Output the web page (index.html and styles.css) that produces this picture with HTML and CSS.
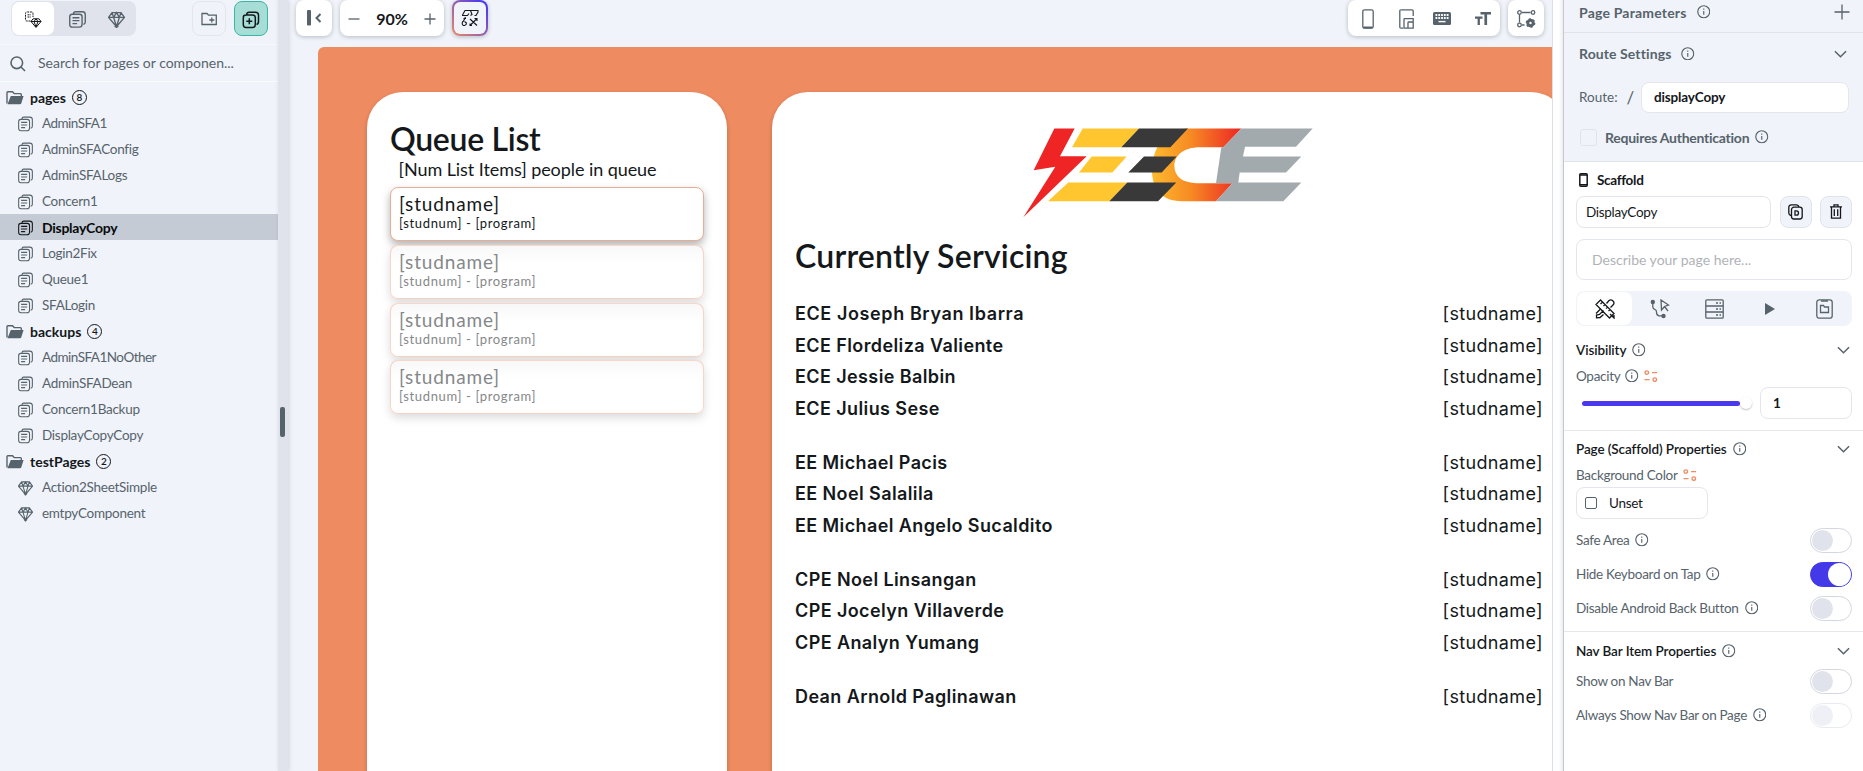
FILE: index.html
```html
<!DOCTYPE html>
<html lang="en">
<head>
<meta charset="utf-8">
<title>DisplayCopy</title>
<link rel="stylesheet" href="styles.css">
</head>
<body>
<svg class="defs" width="0" height="0" aria-hidden="true">
  <symbol id="pages" viewBox="0 0 16 16"><path d="M4.2 3V2.6Q4.2.7 6.2.7H12.600Q15.300.7 15.300 3.300V10.400Q15.300 12.300 13.500 12.600M3 3.100H9.900Q12.300 3.100 12.300 5.500V12.500Q12.300 15.200 9.600 15.200H3.200Q.7 15.200.7 12.600V5.600Q.7 3.100 3 3.100ZM3.300 6.300H9.800M3.300 9.100H9.800M3.300 11.900H7.600"/></symbol>
  <symbol id="gem" viewBox="0 0 16 16"><path d="M3.800 1.500H12.200L15.500 6 8 14.800.5 6ZM.5 6H15.500M5.300 6 8 14.800 10.700 6 8 1.500ZM3.800 1.500 5.300 6M12.200 1.500 10.700 6M6.200 13.800 8 15.500 9.800 13.800"/></symbol>
  <symbol id="folder" viewBox="0 0 18 14"><path fill="none" d="M1 12.500V1.600Q1 .8 1.800.8H6.500L8.200 2.600H14.400Q15.300 2.600 15.300 3.500V5"/><path class="solid" d="M1.500 13.200 4.800 5H17.600L15.300 12.200Q15 13.200 14 13.200Z"/></symbol>
  <symbol id="info" viewBox="0 0 14 14"><circle cx="7" cy="7" r="6.200"/><path d="M7 6.200V10.200M7 3.600V4.900"/></symbol>
  <symbol id="chev" viewBox="0 0 14 8"><path d="M1 1 7 7 13 1"/></symbol>
  <symbol id="vars" viewBox="0 0 14 12"><circle cx="2.800" cy="2.600" r="1.800"/><circle cx="10.800" cy="9.600" r="1.800"/><path d="M8 2.600H13M.5 9.600H5.500"/></symbol>
</svg>
<div class="app">
  <aside class="sidebar">
    <div class="side-tools">
      <div class="segment">
        <span class="seg on"><svg width="18" height="18" viewBox="0 0 18 18"><path stroke-dasharray="2 .8" d="M6.500 10H3Q1.500 10 1.500 8.500V2.500Q1.500 1 3 1H7.500Q9 1 9 2.500V6M3.500 3.800H7M3.500 6H7"/><path d="M9 7.800H15L17 10.500 12 16.500 7 10.500ZM7 10.500H17M10 10.500 12 16 14 10.500 12 7.800Z"/></svg></span>
        <span class="seg"><svg width="17" height="17"><use href="#pages"/></svg></span>
        <span class="seg"><svg width="17" height="17"><use href="#gem"/></svg></span>
      </div>
      <span class="sq add-folder"><svg width="17" height="14" viewBox="0 0 17 14"><path d="M1 12.500V1.500H6L7.500 3.200H15.300V12.500ZM8.300 8H13.300M10.800 5.500V10.500"/></svg></span>
      <span class="sq add-page"><svg width="18" height="18" viewBox="0 0 18 18"><path d="M4.500 3.500Q5 1.200 7 1.200H13.500Q16.500 1.200 16.500 4V10.500Q16.500 13 14.500 13.500M4 4H10.500Q13.300 4 13.300 6.500V13.500Q13.300 16.500 10.500 16.500H4Q1.300 16.500 1.300 13.500V6.500Q1.300 4 4 4ZM7.300 7.300V13.300M4.300 10.300H10.300"/></svg></span>
    </div>
    <div class="search"><svg width="16" height="16" viewBox="0 0 16 16"><circle cx="6.800" cy="6.800" r="5.800"/><path d="M11 11 15 15"/></svg><span>Search for pages or componen...</span></div>
    <ul class="tree">
      <li class="group"><svg><use href="#folder"/></svg><b>pages</b><i>8</i></li>
      <li class="tight"><svg><use href="#pages"/></svg>AdminSFA1</li>
      <li><svg><use href="#pages"/></svg>AdminSFAConfig</li>
      <li><svg><use href="#pages"/></svg>AdminSFALogs</li>
      <li><svg><use href="#pages"/></svg>Concern1</li>
      <li class="selected"><svg><use href="#pages"/></svg>DisplayCopy</li>
      <li><svg><use href="#pages"/></svg>Login2Fix</li>
      <li><svg><use href="#pages"/></svg>Queue1</li>
      <li><svg><use href="#pages"/></svg>SFALogin</li>
      <li class="group"><svg><use href="#folder"/></svg><b>backups</b><i>4</i></li>
      <li class="tight"><svg><use href="#pages"/></svg>AdminSFA1NoOther</li>
      <li><svg><use href="#pages"/></svg>AdminSFADean</li>
      <li><svg><use href="#pages"/></svg>Concern1Backup</li>
      <li><svg><use href="#pages"/></svg>DisplayCopyCopy</li>
      <li class="group"><svg><use href="#folder"/></svg><b>testPages</b><i>2</i></li>
      <li><svg><use href="#gem"/></svg>Action2SheetSimple</li>
      <li><svg><use href="#gem"/></svg>emtpyComponent</li>
    </ul>
  </aside>
  <div class="splitter"><span></span></div>
  <main class="canvas">
    <div class="toolbar">
      <span class="tool collapse"><svg width="15" height="16" viewBox="0 0 15 16"><rect x="0" y="0" width="4" height="15.500" rx="1"/><path d="M13.500 4 9.500 8 13.500 12"/></svg></span>
      <div class="tool zoom"><svg width="12" height="12" viewBox="0 0 12 12"><path d="M.5 6H11.500"/></svg><span>90%</span><svg width="12" height="12" viewBox="0 0 12 12"><path d="M.5 6H11.500M6 .5V11.500"/></svg></div>
      <span class="tool magic"><svg width="18" height="18" viewBox="0 0 18 18"><path d="M1.500 6 4 1.500H17V3L15 6.500H13.500M1 6.500H6.500L8 4.500M9.500 1.500 11 5.500 9.500 6.500M2.500 9.500H5M4.500 8 2.500 12Q1 13 1.200 14.500 1.500 16.800 3.500 16.500T5.500 14L3.500 12.500M9 10 16 16.500M16 9.500 9 16.500M13.500 9.500H16V12M9 14.500V16.500H11"/></svg></span>
      <span class="grow"></span>
      <div class="tool devices">
        <svg width="12" height="20" viewBox="0 0 12 20"><rect x=".8" y=".8" width="10.400" height="18.400" rx="1.800"/><path class="thick" d="M1.500 18.500H10.500"/></svg>
        <svg width="15" height="20" viewBox="0 0 15 20"><path d="M4 19.200H2Q.8 19.200.8 18V2Q.8.8 2 .8H13Q14.200.8 14.200 2V7M5 19.200V10.500Q5 9.700 5.800 9.700H14.200V19.200ZM9 19V13.700Q9 13 9.800 13H14"/></svg>
        <svg width="18" height="13" viewBox="0 0 18 13"><rect class="fill" width="18" height="13" rx="1.500"/><path class="keys" d="M2.500 3H15.500M2.500 6H15.500"/><path class="bar" d="M5.500 9.600H12.500"/></svg>
        <svg width="16" height="13" viewBox="0 0 16 13"><path class="fill" d="M5.500 0H16V2.600H12.100V13H9.400V2.600H5.500ZM0 4.600H7.500V6.800H4.900V13H2.600V6.800H0Z"/></svg>
      </div>
      <span class="tool settings"><svg width="19" height="18" viewBox="0 0 19 18"><path d="M5 2.500H13.500M2.500 5V12.500M5 15H7.500"/><circle cx="2.500" cy="2.500" r="1.800"/><circle cx="16" cy="2.500" r="1.800"/><circle cx="2.500" cy="15" r="1.800"/><circle class="gear" cx="13.500" cy="13" r="2.700"/><circle class="teeth" cx="13.500" cy="13" r="4.100"/></svg></span>
    </div>
    <div class="board">
      <section class="panel queue">
        <h1>Queue List</h1>
        <p>[Num List Items] people in queue</p>
        <div class="card first"><strong>[studname]</strong><small>[studnum] - [program]</small></div>
        <div class="card"><strong>[studname]</strong><small>[studnum] - [program]</small></div>
        <div class="card"><strong>[studname]</strong><small>[studnum] - [program]</small></div>
        <div class="card"><strong>[studname]</strong><small>[studnum] - [program]</small></div>
      </section>
      <section class="panel serving">
        <svg class="logo" width="300" height="100" viewBox="60 60 900 300">
          <defs><linearGradient id="heat" gradientUnits="userSpaceOnUse" x1="456" y1="190" x2="715" y2="190"><stop stop-color="#fdbb2d"/><stop offset=".45" stop-color="#f68a24"/><stop offset="1" stop-color="#ed2b24"/></linearGradient></defs>
          <path fill="#ee2524" d="M163 84H224L180 167H260L70 350 166 199 101 209Z"/>
          <path fill="#ffc62f" d="M248 84H417L364 140H216ZM275 168H380L337 216H237ZM205 246H382L329 302H144Z"/>
          <path fill="url(#heat)" d="M564 84H724L670 140H600C550 140 523 165 523 196 523 228 548 248 590 248H697L648 302H545C485 302 456 265 456 210 456 145 492 84 564 84Z"/>
          <path fill="#393939" d="M417 84H564L511 140H364ZM432 168H530L485 216H385ZM382 246H529L474 302H328Z"/>
          <path fill="#a3aaae" d="M724 84H938L888 139H735L729 168H904L858 216H719L715 246H904L850 302H648L697 248H648L664 140H670Z"/>
        </svg>
        <h1>Currently Servicing</h1>
        <div class="rows">
          <div class="row"><b class="wide">ECE Joseph Bryan Ibarra</b><span>[studname]</span></div>
          <div class="row"><b>ECE Flordeliza Valiente</b><span>[studname]</span></div>
          <div class="row"><b>ECE Jessie Balbin</b><span>[studname]</span></div>
          <div class="row"><b>ECE Julius Sese</b><span>[studname]</span></div>
        </div>
        <div class="rows">
          <div class="row"><b>EE Michael Pacis</b><span>[studname]</span></div>
          <div class="row"><b>EE Noel Salalila</b><span>[studname]</span></div>
          <div class="row"><b>EE Michael Angelo Sucaldito</b><span>[studname]</span></div>
        </div>
        <div class="rows">
          <div class="row"><b>CPE Noel Linsangan</b><span>[studname]</span></div>
          <div class="row"><b>CPE Jocelyn Villaverde</b><span>[studname]</span></div>
          <div class="row"><b>CPE Analyn Yumang</b><span>[studname]</span></div>
        </div>
        <div class="rows">
          <div class="row"><b>Dean Arnold Paglinawan</b><span>[studname]</span></div>
        </div>
      </section>
    </div>
  </main>
  <div class="gutter"></div>
  <aside class="props">
    <div class="page-settings">
      <div class="head params"><b>Page Parameters</b><svg class="info"><use href="#info"/></svg><svg class="plus" width="16" height="16" viewBox="0 0 16 16"><path d="M.5 8H15.500M8 .5V15.500"/></svg></div>
      <div class="head route-head"><b>Route Settings</b><svg class="info"><use href="#info"/></svg><svg class="chev"><use href="#chev"/></svg></div>
      <div class="route"><span>Route:</span><em>/</em><div class="field">displayCopy</div></div>
      <div class="auth"><span class="check"></span><b>Requires Authentication</b><svg class="info"><use href="#info"/></svg></div>
    </div>
    <div class="scaffold">
      <div class="title"><svg width="9" height="14" viewBox="0 0 9 14"><rect x=".8" y=".8" width="7.400" height="12.400" rx="1"/><path d="M.8 2H8.200M.8 11.800H8.200"/></svg><b>Scaffold</b></div>
      <div class="name-row">
        <div class="field">DisplayCopy</div>
        <span class="mini"><svg width="15" height="16" viewBox="0 0 15 16"><path d="M3 11.500Q.8 11 .8 9V3.500Q.8.8 3.500.8H8.500Q10.500.8 11 3"/><rect x="3.500" y="3.200" width="10.700" height="11.800" rx="2.500"/><path d="M7 6.800H8.500Q10.500 6.800 10.500 9T8.500 11.200H7Z"/></svg></span>
        <span class="mini"><svg width="12" height="15" viewBox="0 0 12 15"><path d="M0 2.800H12M4 2.500V.8H8V2.500M1.500 3V14.200H10.500V3M4.300 5.300V12M7.700 5.300V12"/></svg></span>
      </div>
      <div class="describe">Describe your page here...</div>
      <div class="tabs">
        <span class="on"><svg width="20" height="20" viewBox="0 0 20 20"><path d="M5.500 1 1 5.500 14.500 19 19 14.500ZM7.500 3 5.500 5M10 5.500 8.500 7M12.500 8 11 9.500M15 10.500 13.500 12M11.500 4.500 14 1.500Q16 0 18 2T18 6L15.500 8.500M8.500 11.500 4.500 15.500 1.500 16V18.800L5 18.500 8.500 15.500M1 14.500 5 10.500M15 15 19 19V16"/></svg></span>
        <span><svg width="20" height="20" viewBox="0 0 20 20"><circle class="fill" cx="2.800" cy="3" r="2.200"/><circle class="fill" cx="13.500" cy="17" r="2.200"/><path d="M2.800 4V8Q3 10 5 10.500 6.500 11 6.500 13 6.500 16.500 9 16.800H13M11 1 18.500 6 14.500 7.500 11.500 11ZM14.500 7.500 18 12"/></svg></span>
        <span><svg width="19" height="20" viewBox="0 0 19 20"><rect x=".8" y=".8" width="17.400" height="18.400" rx="1"/><path d="M.8 7H18.200M.8 13H18.200M11 4H13M14.500 4H16M11 10H13M14.500 10H16M11 16H13M14.500 16H16"/></svg></span>
        <span><svg width="10" height="12" viewBox="0 0 10 12"><path class="fill" d="M0 0 10 6 0 12Z"/></svg></span>
        <span><svg width="17" height="20" viewBox="0 0 17 20"><rect x=".8" y=".8" width="15.400" height="18.400" rx="2.500"/><path d="M5 2H12M4.500 6.500H7.500L8.500 8H12.500V13.500H4.500Z"/></svg></span>
      </div>
      <div class="sub visibility"><b>Visibility</b><svg class="info"><use href="#info"/></svg><svg class="chev"><use href="#chev"/></svg></div>
      <div class="label opacity"><span>Opacity</span><svg class="info"><use href="#info"/></svg><svg class="vars"><use href="#vars"/></svg></div>
      <div class="slider"><div class="track"></div><div class="thumb"></div><div class="field">1</div></div>
    </div>
    <div class="block page-props">
      <div class="sub"><b>Page (Scaffold) Properties</b><svg class="info"><use href="#info"/></svg><svg class="chev"><use href="#chev"/></svg></div>
      <div class="label bg"><span>Background Color</span><svg class="vars"><use href="#vars"/></svg></div>
      <div class="unset"><span></span>Unset</div>
      <div class="switch-row"><span>Safe Area</span><svg class="info"><use href="#info"/></svg><i class="switch"></i></div>
      <div class="switch-row"><span>Hide Keyboard on Tap</span><svg class="info"><use href="#info"/></svg><i class="switch active"></i></div>
      <div class="switch-row"><span>Disable Android Back Button</span><svg class="info"><use href="#info"/></svg><i class="switch"></i></div>
    </div>
    <div class="block nav-props">
      <div class="sub"><b>Nav Bar Item Properties</b><svg class="info"><use href="#info"/></svg><svg class="chev"><use href="#chev"/></svg></div>
      <div class="switch-row"><span>Show on Nav Bar</span><i class="switch"></i></div>
      <div class="switch-row"><span>Always Show Nav Bar on Page</span><svg class="info"><use href="#info"/></svg><i class="switch faded"></i></div>
    </div>
  </aside>
</div>
</body>
</html>
```
FILE: styles.css
```css
* { box-sizing: border-box; }
body { margin: 0; overflow: hidden; font-family: Lato, "Open Sans", sans-serif; font-size: 14px; color: #57636c; }
svg { fill: none; stroke: #57636c; stroke-width: 1.3; flex: none; }
.defs { position: absolute; }
.solid, .fill { fill: #57636c; stroke: none; }
.app { display: flex; width: 1863px; height: 771px; overflow: hidden; background: #f0f3f9; }

.sidebar { width: 278px; flex: none; background: #f0f3f9; }
.side-tools { display: flex; height: 45px; padding: 1px 10px 0 11px; border-bottom: 1px solid #f6f8fb; }
.segment { display: flex; width: 125px; height: 35px; padding: 1px 0 1px 1px; background: #e0e3ec; border-radius: 8px; }
.seg { flex: 1; display: flex; align-items: center; justify-content: center; padding-top: 2px; }
.seg.on { flex: 0 0 42px; background: #fff; border-radius: 7px; }
.seg.on svg { stroke: #14181b; stroke-width: 1; }
.seg:nth-child(2) { padding-left: 4px; }
.sq { width: 34px; height: 35px; display: flex; align-items: center; justify-content: center; border-radius: 8px; }
.add-folder { margin-left: 56px; border: 1px solid #e3e6ed; }
.add-page { margin-left: 8px; background: #a6ddd7; border: 1.500px solid #39b7a6; }
.add-page svg { stroke: #14181b; stroke-width: 1.500; margin-top: 3px; }
.search { display: flex; align-items: center; gap: 12px; height: 37px; padding: 0 0 1px 10px; border-bottom: 1px solid #fafbfd; font-size: 14px; }
.search svg { stroke-width: 1.600; margin-top: 2px; }
.tree { list-style: none; margin: 2px 0 0; padding: 0; }
.tree li { display: flex; align-items: center; height: 26px; padding-left: 18px; gap: 9px; font-size: 13.500px; letter-spacing: -.27px; }
.tree li svg { width: 15px; height: 16px; margin-top: 1px; stroke-width: 1.150; }
.tree .tight { letter-spacing: -.52px; }
.tree .group { padding-left: 6px; gap: 6px; color: #14181b; font-size: 14px; letter-spacing: 0; }
.tree .group svg { width: 18px; height: 14px; stroke-width: 1.400; }
.group i { width: 15px; height: 15px; border: 1px solid #14181b; border-radius: 50%; font-style: normal; font-size: 10px; line-height: 13px; text-align: center; font-weight: 600; }
.tree .selected { background: #c5cbd5; color: #080a0c; font-weight: 700; font-size: 14px; }
.tree .selected svg { stroke: #14181b; }

.splitter { width: 10px; flex: none; background: #e0e3ec; display: flex; align-items: center; padding: 73px 0 0 2px; z-index: 1; box-shadow: 1px 0 4px rgba(40, 50, 70, .15); }
.splitter span { width: 5px; height: 30px; border-radius: 2px; background: #57636c; }

.canvas { width: 1264px; flex: none; overflow: hidden; }
.toolbar { display: flex; height: 47px; padding: 0 8px; gap: 8px; }
.tool { display: flex; align-items: center; justify-content: center; height: 36px; border-radius: 8px; background: #fff; box-shadow: 0 1px 4px rgba(30, 40, 60, .28); }
.collapse, .magic, .settings { width: 36px; }
.collapse svg { stroke-width: 2; }
.collapse rect { fill: #57636c; stroke: none; }
.zoom { width: 104px; justify-content: space-between; padding: 1px 8px 0; font-size: 16px; font-weight: 700; color: #14181b; }
.magic { border: 2px solid transparent; background: linear-gradient(#f0f3f9, #f0f3f9) padding-box, linear-gradient(45deg, #ee8b60, #4b39ef 90%) border-box; }
.magic svg { stroke: #14181b; stroke-width: 1.100; }
.grow { flex: 1; }
.devices { width: 152px; justify-content: flex-start; padding: 2px 0 0 14px; }
.devices svg:nth-child(2) { margin-left: 25px; }
.devices svg:nth-child(3) { margin: 0 24px 2px 19px; }
.devices svg:nth-child(4) { margin-bottom: 2px; }
.thick { stroke-width: 2; }
.keys { stroke: #fff; stroke-width: 1.800; stroke-dasharray: 1.800 1; }
.bar { stroke: #fff; stroke-width: 1.400; }
.settings svg { margin-top: 2px; }
.gear { stroke-width: 3; }
.teeth { stroke-width: 1.500; stroke-dasharray: 2 2.290; }

.board { display: flex; gap: 45px; width: 1249px; height: 724px; margin-left: 30px; padding: 45px 0 0 49px; background: #ee8b60; border-radius: 6px 0 0 0; color: #14181b; }
.panel { height: 700px; flex: none; background: #fff; border-radius: 36px 36px 0 0; box-shadow: 0 2px 4px rgba(0, 0, 0, .2); }
.queue { width: 360px; padding: 27px 23px; }
h1 { margin: 0; font-size: 32px; line-height: 40px; font-weight: 600; letter-spacing: .2px; }
.queue h1 { letter-spacing: -.3px; }
.queue p { margin: -1px 0 7px 8.500px; font-size: 18px; line-height: 22px; letter-spacing: -.07px; }
.card { height: 54px; margin-bottom: 3.800px; padding: 3px 8px; border: 1px solid rgba(238, 139, 96, .35); border-radius: 8px; display: flex; flex-direction: column; background: linear-gradient(#f8f8f8, #fff 35%); box-shadow: 0 4px 10px rgba(0, 0, 0, .14); color: #85888a; }
.card strong { font-size: 19px; line-height: 25px; font-weight: 400; letter-spacing: .85px; }
.card small { font-size: 13px; line-height: 14px; letter-spacing: .65px; }
.card.first { border-color: #e9ae95; background: #fff; color: #14181b; box-shadow: 0 4px 8px rgba(0, 0, 0, .3); }
.serving { width: 795px; padding: 28px 25px 0 23px; }
.logo { display: block; margin: 0 auto; stroke: none; transform: translate(1px, .5px); }
.serving h1 { margin: 15.500px 0 22.500px; }
.rows { margin-bottom: 22.700px; font-size: 18px; line-height: 31.500px; }
.row { display: flex; justify-content: space-between; font-family: Inter, sans-serif; }
.row b { font-weight: 600; letter-spacing: .4px; }
.row .wide { letter-spacing: .6px; }
.row span { letter-spacing: .35px; margin-right: -1px; }

.gutter { width: 11px; flex: none; border-left: 1px solid #dcdfe4; background: linear-gradient(90deg, #fff 55%, #eceef1); }
.props { width: 300px; flex: none; border-left: 1px solid #c4c7cc; background: #fff; font-size: 13.500px; letter-spacing: -.3px; }
.info { width: 13.500px; height: 13.500px; stroke-width: 1.200; }
.chev { width: 13px; height: 8px; margin-left: auto; stroke-width: 1.600; }
.vars { width: 14px; height: 12px; stroke: #ee8b60; stroke-width: 1.300; }
.page-settings { height: 162px; background: #f0f3f9; border-bottom: 1px solid #e0e3e7; }
.head { display: flex; align-items: center; gap: 10px; padding: 0 16px 0 15px; font-size: 14px; letter-spacing: .2px; }
.params { height: 33px; padding: 0 13px 8px 15px; border-bottom: 1px solid #e0e3e7; }
.plus { margin-left: auto; }
.route-head { height: 41px; letter-spacing: .1px; }
.route { display: flex; align-items: center; height: 46px; padding: 0 14px 0 15px; }
.route em { margin: 0 0 0 9px; font-style: normal; font-size: 17px; }
.route span { letter-spacing: 0; }
.field { border: 1px solid #e3e6ec; border-radius: 8px; background: #fff; color: #14181b; display: flex; align-items: center; }
.route .field { flex: none; width: 208px; height: 31px; padding-left: 12px; margin-left: auto; font-weight: 700; letter-spacing: -.15px; }
.auth { display: flex; align-items: center; height: 34px; padding: 0 16px; gap: 6px; font-size: 14px; letter-spacing: -.25px; }
.check { width: 17px; height: 17px; margin-right: 2px; border: 1px solid #e0e3e7; border-radius: 3px; }
.scaffold { height: 268px; padding: 9px 11px 0 12px; }
.title { display: flex; align-items: center; gap: 9px; height: 18px; padding-left: 3px; color: #14181b; }
.title svg { stroke: #14181b; stroke-width: 1.500; }
.name-row { display: flex; justify-content: space-between; margin-top: 7px; }
.name-row .field { width: 195px; height: 32px; padding-left: 9px; }
.mini { width: 32px; height: 32px; margin-top: -.5px; display: flex; align-items: center; justify-content: center; border: 1px solid #e0e3ec; border-radius: 8px; background: #f0f3f9; }
.mini svg { stroke: #14181b; }
.describe { height: 41px; margin-top: 11px; padding-left: 15px; border: 1px solid #e3e6ec; border-radius: 8px; font-size: 14px; letter-spacing: 0; line-height: 39px; color: #b0b3b8; }
.tabs { display: flex; height: 35px; margin-top: 11px; padding: 1px 0 1px 1px; background: #f0f3f9; border-radius: 8px; }
.tabs span { flex: 1; display: flex; align-items: center; justify-content: center; }
.tabs .on { background: #fff; border-radius: 8px; }
.tabs .on svg { stroke: #14181b; }
.sub { display: flex; align-items: center; gap: 6px; height: 26px; padding-right: 2px; color: #14181b; }
.sub b { font-weight: 600; letter-spacing: -.1px; }
.visibility { margin-top: 11px; }
.label { display: flex; align-items: center; gap: 5px; height: 25px; }
.slider { display: flex; align-items: center; height: 32px; margin-top: -1px; padding-left: 6px; }
.track { width: 158px; height: 5px; border-radius: 3px; background: #4b39ef; }
.thumb { width: 12px; height: 12px; border-radius: 50%; background: #fff; box-shadow: 0 1px 2px rgba(0, 0, 0, .25); }
.slider .field { width: 92px; height: 32px; margin-left: auto; padding-left: 12px; font-weight: 700; }
.block { border-top: 1px solid #e6e8ec; padding: 0 11px 0 12px; }
.page-props { height: 201px; padding-top: 5px; }
.unset { display: flex; align-items: center; width: 132px; height: 32px; padding-left: 8px; gap: 12px; border: 1px solid #e3e6ec; border-radius: 8px; color: #14181b; margin: 0 0 4px; }
.unset span { width: 12px; height: 12px; border: 1px solid #57636c; border-radius: 2px; }
.switch-row { display: flex; align-items: center; gap: 6px; height: 34px; }
.switch { width: 42px; height: 25px; margin-left: auto; padding: 1px; border: 1px solid #d4d7e0; border-radius: 13px; background: #fff; display: flex; }
.switch::before { content: ""; width: 21px; height: 21px; border-radius: 50%; background: #e0e3ec; }
.switch.active { background: #4339e8; border-color: #4339e8; justify-content: flex-end; padding: 0; }
.switch.active::before { width: 23px; height: 23px; background: #fff; }
.switch.faded { opacity: .5; }
.nav-props { padding-top: 6px; }
```
